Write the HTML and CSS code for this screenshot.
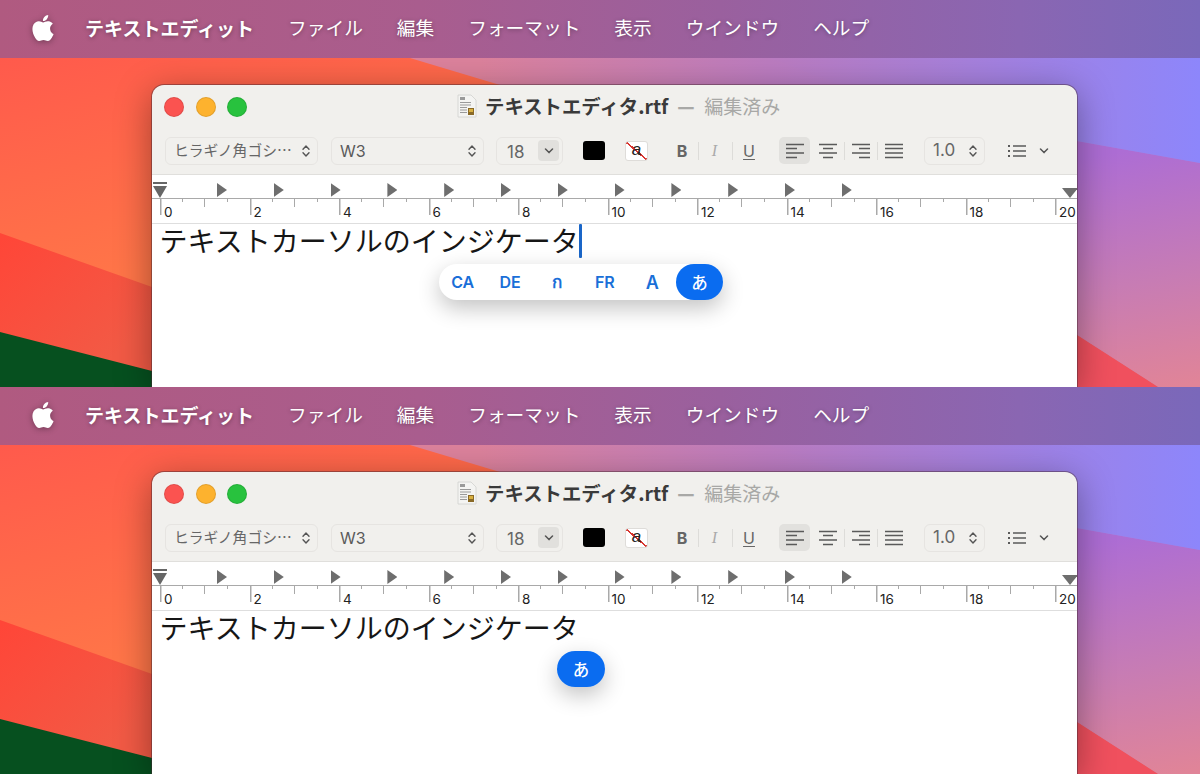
FILE: index.html
```html
<!DOCTYPE html>
<html lang="ja">
<head>
<meta charset="utf-8">
<title>テキストエディット</title>
<link rel="stylesheet" href="styles.css">
</head>
<body>
<svg class="sprite" aria-hidden="true">
  <defs>
    <linearGradient id="g-base" gradientUnits="userSpaceOnUse" x1="0" y1="58" x2="60" y2="290"><stop offset="0" stop-color="#ff5a4c"/><stop offset="1" stop-color="#ff7548"/></linearGradient>
    <linearGradient id="g-mid" gradientUnits="userSpaceOnUse" x1="480" y1="70" x2="960" y2="70"><stop offset="0" stop-color="#dc829c"/><stop offset=".6" stop-color="#bc7cc0"/><stop offset="1" stop-color="#a87fd8"/></linearGradient>
    <linearGradient id="g-top" gradientUnits="userSpaceOnUse" x1="780" y1="70" x2="1200" y2="70"><stop offset="0" stop-color="#ba7cc2"/><stop offset=".45" stop-color="#a680dc"/><stop offset="1" stop-color="#8d86fb"/></linearGradient>
    <linearGradient id="g-low" gradientUnits="userSpaceOnUse" x1="1130" y1="150" x2="1170" y2="387"><stop offset="0" stop-color="#ad6dd4"/><stop offset=".55" stop-color="#c77cb4"/><stop offset="1" stop-color="#e08498"/></linearGradient>
    <linearGradient id="g-red" gradientUnits="userSpaceOnUse" x1="0" y1="240" x2="110" y2="360"><stop offset="0" stop-color="#ff4638"/><stop offset="1" stop-color="#f25a45"/></linearGradient>
    <symbol id="wall" viewBox="0 0 1200 387" preserveAspectRatio="none">
      <rect width="1200" height="387" fill="url(#g-base)"/>
      <polygon points="410,58 1200,58 1200,387 1158,387 1077,335 500,85" fill="url(#g-mid)"/>
      <polygon points="1077,141 1200,163 1200,387 1158,387 1077,335" fill="url(#g-low)"/>
      <polygon points="770,58 1200,58 1200,163 1077,141 840,85" fill="url(#g-top)"/>
      <polygon points="1077,335 1158,387 1077,387" fill="#f0505e"/>
      <polygon points="0,233 152,287 152,387 0,387" fill="url(#g-red)"/>
      <polygon points="0,332 152,371 152,387 0,387" fill="#06501f"/>
    </symbol>
    <symbol id="apple" viewBox="0 0 24 24"><path d="M12.152 6.896c-.948 0-2.415-1.078-3.96-1.04-2.04.027-3.91 1.183-4.961 3.014-2.117 3.675-.546 9.103 1.519 12.09 1.013 1.454 2.208 3.09 3.792 3.039 1.52-.065 2.09-.987 3.935-.987 1.831 0 2.35.987 3.96.948 1.637-.026 2.676-1.48 3.676-2.948 1.156-1.688 1.636-3.325 1.662-3.415-.039-.013-3.182-1.221-3.22-4.857-.026-3.04 2.48-4.494 2.597-4.559-1.429-2.09-3.623-2.324-4.39-2.376-2-.156-3.675 1.09-4.61 1.09zM15.53 3.83c.843-1.012 1.4-2.427 1.245-3.83-1.207.052-2.662.805-3.532 1.818-.78.896-1.454 2.338-1.273 3.714 1.338.104 2.715-.688 3.559-1.701"/></symbol>
    <symbol id="doc" viewBox="0 0 20 24">
      <path d="M1 1h13l5 5v17H1z" fill="#f4f4f2" stroke="#d0d0ce" stroke-width=".8"/>
      <path d="M3 3h5v3H3zM3 8h11v1H3zM3 10.500h11v1H3zM3 13h7v1H3zM3 15.500h7v1H3zM3 18h7v1H3z" fill="#9a9a9a"/>
      <rect x="11" y="14" width="6" height="7" fill="#8a6a28"/><rect x="12" y="15" width="4" height="3" fill="#d8b040"/>
    </symbol>
    <symbol id="updown" viewBox="0 0 8 14"><path d="M1 5.200 4 2l3 3.200M1 8.800 4 12l3-3.200" fill="none" stroke="#555" stroke-width="1.400" stroke-linecap="round" stroke-linejoin="round"/></symbol>
    <symbol id="down" viewBox="0 0 10 6"><path d="M1.500 1 5 4.600 8.500 1" fill="none" stroke="#555" stroke-width="1.500" stroke-linecap="round" stroke-linejoin="round"/></symbol>
    <symbol id="al-left" viewBox="0 0 18 16"><path d="M0 1.500h18M0 5.500h11M0 10h18M0 14.500h11" stroke="#5a5a5a" stroke-width="1.300" fill="none"/></symbol>
    <symbol id="al-center" viewBox="0 0 18 16"><path d="M0 1.500h18M4 5.500h10M0 10h18M4 14.500h10" stroke="#5a5a5a" stroke-width="1.300" fill="none"/></symbol>
    <symbol id="al-right" viewBox="0 0 18 16"><path d="M0 1.500h18M7 5.500h11M0 10h18M7 14.500h11" stroke="#5a5a5a" stroke-width="1.300" fill="none"/></symbol>
    <symbol id="al-just" viewBox="0 0 18 16"><path d="M0 1.500h18M0 5.500h18M0 10h18M0 14.500h18" stroke="#5a5a5a" stroke-width="1.300" fill="none"/></symbol>
    <symbol id="list" viewBox="0 0 18 14"><path d="M5 2h13M5 7h13M5 12h13" stroke="#5a5a5a" stroke-width="1.300" fill="none"/><path d="M0 1h2v2H0zM0 6h2v2H0zM0 11h2v2H0z" fill="#5a5a5a"/></symbol>
    <symbol id="first" viewBox="0 0 14 16"><path d="M0 0h14v2H0z" fill="#666"/><path d="M0 4h14L7 16z" fill="#666"/></symbol>
    <symbol id="last" viewBox="0 0 16 10"><path d="M0 0h16L8 10z" fill="#6e6e6e"/></symbol>
  </defs>
</svg>

<section class="panel">
  <svg class="wallpaper" aria-hidden="true"><use href="#wall"/></svg>
  <nav class="menubar">
    <svg class="apple"><use href="#apple"/></svg>
    <span class="menu-app">テキストエディット</span>
    <span>ファイル</span><span>編集</span><span>フォーマット</span><span>表示</span><span>ウインドウ</span><span>ヘルプ</span>
  </nav>
  <div class="desktop">
    <div class="window">
      <header class="titlebar">
        <div class="lights"><i class="light red"></i><i class="light amber"></i><i class="light green"></i></div>
        <svg class="doc-icon"><use href="#doc"/></svg>
        <strong class="title-name">テキストエディタ.rtf</strong>
        <span class="title-dash">—</span>
        <span class="title-state">編集済み</span>
      </header>
      <div class="toolbar">
        <div class="select select-wide"><span>ヒラギノ角ゴシ…</span><svg class="updown"><use href="#updown"/></svg></div>
        <div class="select select-wide select-weight"><span>W3</span><svg class="updown"><use href="#updown"/></svg></div>
        <div class="select select-size"><span class="size-value">18</span><b class="size-btn"><svg class="down"><use href="#down"/></svg></b></div>
        <div class="swatch"></div>
        <div class="bg-swatch">a</div>
        <div class="styles"><span class="st st-b">B</span><span class="st st-i">I</span><span class="st st-u">U</span></div>
        <div class="aligns">
          <span class="al al-on"><svg class="al-icon"><use href="#al-left"/></svg></span>
          <span class="al"><svg class="al-icon"><use href="#al-center"/></svg></span>
          <span class="al al-sep"><svg class="al-icon"><use href="#al-right"/></svg></span>
          <span class="al al-sep"><svg class="al-icon"><use href="#al-just"/></svg></span>
        </div>
        <div class="select select-spacing"><span>1.0</span><svg class="updown"><use href="#updown"/></svg></div>
        <svg class="list-icon"><use href="#list"/></svg>
        <svg class="down list-down"><use href="#down"/></svg>
      </div>
      <div class="ruler">
        <svg class="first-marker"><use href="#first"/></svg>
        <svg class="last-marker"><use href="#last"/></svg>
        <div class="tabs"><i></i><i></i><i></i><i></i><i></i><i></i><i></i><i></i><i></i><i></i><i></i><i></i></div>
        <div class="marks"><span>0</span><span>2</span><span>4</span><span>6</span><span>8</span><span>10</span><span>12</span><span>14</span><span>16</span><span>18</span><span>20</span></div>
      </div>
      <div class="doc">
        <p class="doc-text">テキストカーソルのインジケータ<i class="caret"></i></p>
        <div class="indicator indicator-full">
          <span class="ind-item">CA</span><span class="ind-item">DE</span><span class="ind-item ind-thai">ก</span><span class="ind-item">FR</span><span class="ind-item ind-a">A</span><span class="ind-item ind-on">あ</span>
        </div>
      </div>
    </div>
  </div>
</section>

<section class="panel">
  <svg class="wallpaper" aria-hidden="true"><use href="#wall"/></svg>
  <nav class="menubar">
    <svg class="apple"><use href="#apple"/></svg>
    <span class="menu-app">テキストエディット</span>
    <span>ファイル</span><span>編集</span><span>フォーマット</span><span>表示</span><span>ウインドウ</span><span>ヘルプ</span>
  </nav>
  <div class="desktop">
    <div class="window">
      <header class="titlebar">
        <div class="lights"><i class="light red"></i><i class="light amber"></i><i class="light green"></i></div>
        <svg class="doc-icon"><use href="#doc"/></svg>
        <strong class="title-name">テキストエディタ.rtf</strong>
        <span class="title-dash">—</span>
        <span class="title-state">編集済み</span>
      </header>
      <div class="toolbar">
        <div class="select select-wide"><span>ヒラギノ角ゴシ…</span><svg class="updown"><use href="#updown"/></svg></div>
        <div class="select select-wide select-weight"><span>W3</span><svg class="updown"><use href="#updown"/></svg></div>
        <div class="select select-size"><span class="size-value">18</span><b class="size-btn"><svg class="down"><use href="#down"/></svg></b></div>
        <div class="swatch"></div>
        <div class="bg-swatch">a</div>
        <div class="styles"><span class="st st-b">B</span><span class="st st-i">I</span><span class="st st-u">U</span></div>
        <div class="aligns">
          <span class="al al-on"><svg class="al-icon"><use href="#al-left"/></svg></span>
          <span class="al"><svg class="al-icon"><use href="#al-center"/></svg></span>
          <span class="al al-sep"><svg class="al-icon"><use href="#al-right"/></svg></span>
          <span class="al al-sep"><svg class="al-icon"><use href="#al-just"/></svg></span>
        </div>
        <div class="select select-spacing"><span>1.0</span><svg class="updown"><use href="#updown"/></svg></div>
        <svg class="list-icon"><use href="#list"/></svg>
        <svg class="down list-down"><use href="#down"/></svg>
      </div>
      <div class="ruler">
        <svg class="first-marker"><use href="#first"/></svg>
        <svg class="last-marker"><use href="#last"/></svg>
        <div class="tabs"><i></i><i></i><i></i><i></i><i></i><i></i><i></i><i></i><i></i><i></i><i></i><i></i></div>
        <div class="marks"><span>0</span><span>2</span><span>4</span><span>6</span><span>8</span><span>10</span><span>12</span><span>14</span><span>16</span><span>18</span><span>20</span></div>
      </div>
      <div class="doc">
        <p class="doc-text">テキストカーソルのインジケータ</p>
        <div class="indicator indicator-single">
          <span class="ind-item ind-on">あ</span>
        </div>
      </div>
    </div>
  </div>
</section>
</body>
</html>
```

FILE: styles.css
```css
* { box-sizing: border-box; }
html, body { margin: 0; padding: 0; }
body {
  width: 1200px;
  height: 774px;
  overflow: hidden;
  font-family: "Noto Sans CJK JP", "Inter", "Liberation Sans", sans-serif;
  color: #222;
}
.sprite { position: absolute; width: 0; height: 0; }

.panel {
  position: relative;
  height: 387px;
  overflow: hidden;
  display: flex;
  flex-direction: column;
}
.wallpaper { position: absolute; inset: 0; width: 100%; height: 100%; }

/* menu bar */
.menubar {
  position: relative;
  z-index: 1;
  flex: none;
  height: 58px;
  display: flex;
  align-items: center;
  gap: 34px;
  padding: 0 0 3px 30px;
  background: linear-gradient(90deg, #b05a80 0%, #a95d8e 35%, #9a609e 60%, #8a66b2 85%, #7a68ba 100%);
  color: #fff;
  font-size: 18.700px;
  line-height: 1;
  text-shadow: 0 1px 4px rgba(0, 0, 0, .35);
}
.apple { width: 26px; height: 26px; fill: #fff; margin-right: -5px; filter: drop-shadow(0 1px 3px rgba(0, 0, 0, .35)); }
.menu-app { font-weight: 700; font-size: 19px; }

/* window */
.desktop {
  position: relative;
  flex: 1;
  min-height: 0;
  padding: 27px 123px 0 152px;
  display: flex;
}
.window {
  flex: 1;
  display: flex;
  flex-direction: column;
  border-radius: 12px 12px 0 0;
  background: #f1f0ed;
  box-shadow: 0 0 0 1px rgba(70, 40, 50, .45), 0 8px 36px rgba(0, 0, 0, .38);
  overflow: hidden;
}
.titlebar {
  flex: none;
  height: 45px;
  display: flex;
  align-items: center;
  padding-left: 12px;
  font-size: 19.400px;
  line-height: 1;
}
.lights { display: flex; gap: 11.500px; width: 83px; margin-bottom: 1px; }
.light { width: 20px; height: 20px; border-radius: 50%; border: 1px solid rgba(0, 0, 0, .1); }
.red { background: #fb5350; }
.amber { background: #fdb22e; }
.green { background: #28c23e; }
.doc-icon { width: 20px; height: 24px; margin: 0 8px 3px 210px; }
.title-name { font-weight: 700; color: #3a3a3a; margin-bottom: 4px; }
.title-dash { color: #a8a8a6; font-weight: 900; font-size: 19px; margin: 0 0 4px 9px; width: 27px; }
.title-state { color: #a8a8a6; font-weight: 400; font-size: 19px; margin-bottom: 4px; }

/* toolbar */
.toolbar {
  flex: none;
  height: 45px;
  padding: 7px 0 10px 13px;
  display: flex;
  align-items: center;
  border-bottom: 1px solid #e0dfdc;
}
.select {
  height: 28px;
  display: flex;
  align-items: center;
  justify-content: space-between;
  border: 1.500px solid #e6e4e1;
  border-radius: 6px;
  color: #666;
  font-size: 15px;
  line-height: 1;
  padding: 0 7px 0 8px;
}
.select-wide { width: 153px; font-size: 14.800px; }
.select-weight { margin-left: 13px; font-size: 16px; font-family: "Inter", "Liberation Sans", sans-serif; color: #5a5a5a; }
.select-size {
  width: 67px;
  margin-left: 12px;
  padding: 0 3px 0 10px;
  font-size: 17px;
  font-family: "Inter", "Liberation Sans", sans-serif;
}
.size-value { padding-top: 3px; }
.select-spacing { width: 61px; margin-left: 14px; font-size: 17px; font-family: "Inter", "Liberation Sans", sans-serif; }
.updown { width: 8px; height: 14px; flex: none; }
.down { width: 10px; height: 6px; }
.size-btn {
  width: 21px;
  height: 21px;
  border-radius: 4px;
  background: #e1e0dd;
  display: flex;
  align-items: center;
  justify-content: center;
}
.swatch { width: 22px; height: 19px; margin-left: 20px; border-radius: 3px; background: #000; }
.bg-swatch {
  width: 23px;
  height: 20px;
  margin-left: 20px;
  border: 1px solid #dedcd9;
  border-radius: 3px;
  background: linear-gradient(to top right, #fff 47%, #d8352f 47%, #d8352f 53%, #fff 53%);
  color: #222;
  font-size: 17px;
  font-style: italic;
  line-height: 16px;
  text-align: center;
  font-family: "Liberation Sans", sans-serif;
}
.styles { display: flex; margin-left: 21px; align-items: center; }
.st {
  width: 33px;
  height: 18px;
  line-height: 18px;
  text-align: center;
  font-size: 16px;
  color: #666;
  font-family: "Inter", "Liberation Sans", sans-serif;
  border-left: 1px solid #dddcd9;
}
.st-b { width: 29px; border-left: 0; font-weight: 700; padding-right: 3px; }
.st-i { width: 34px; color: #aaa; font-style: italic; font-family: "Liberation Serif", serif; padding-right: 2px; }
.st-u { width: 33px; text-decoration: underline; text-underline-offset: 2px; }
.aligns { display: flex; align-items: center; margin-left: 13px; }
.al {
  width: 33px;
  height: 18px;
  display: flex;
  align-items: center;
  justify-content: center;
}
.al-on { height: 27px; margin-left: 1px; width: 31px; margin-right: 1px; border-radius: 5px; background: #e2e1de; }
.al-sep { border-left: 1px solid #dddcd9; }
.al-icon { width: 18px; height: 16px; }
.list-icon { width: 18px; height: 14px; margin-left: 23px; }
.list-down { margin-left: 13px; }

/* ruler */
.ruler {
  position: relative;
  flex: none;
  height: 49px;
  background: #fff;
  border-bottom: 1px solid #dedede;
}
.first-marker { position: absolute; left: 1px; top: 7px; width: 14px; height: 16px; }
.last-marker { position: absolute; right: -1px; top: 13px; width: 16px; height: 10px; }
.tabs {
  height: 24px;
  display: flex;
  gap: 46.800px;
  align-items: flex-start;
  padding: 8px 0 0 65px;
  border-bottom: 1.500px solid #a9a9a9;
}
.tabs i {
  flex: none;
  width: 10px;
  height: 14px;
  background: #6e6e6e;
  clip-path: polygon(0 0, 100% 50%, 0 100%);
}
.marks { display: flex; padding-left: 8px; }
.marks span {
  flex: none;
  width: 89.500px;
  height: 23px;
  padding: 5px 0 0 4px;
  font-family: "Inter", "Liberation Sans", sans-serif;
  font-size: 13.500px;
  line-height: 16px;
  color: #222;
  background:
    linear-gradient(#a9a9a9, #a9a9a9) 0 0 / 1.500px 16px no-repeat,
    linear-gradient(#a9a9a9, #a9a9a9) 44px 0 / 1px 8px no-repeat,
    linear-gradient(#a9a9a9, #a9a9a9) 22px 0 / 1px 3px no-repeat,
    linear-gradient(#a9a9a9, #a9a9a9) 67px 0 / 1px 3px no-repeat;
}

/* document */
.doc { position: relative; flex: 1; background: #fff; padding-left: 7.500px; }
.doc-text {
  margin: 0;
  display: flex;
  align-items: center;
  height: 33px;
  font-size: 28px;
  line-height: 33px;
  font-weight: 400;
  color: #161616;
  white-space: nowrap;
}
.caret { width: 3px; height: 34px; background: #1a66c8; border-radius: 1px; }
.indicator {
  position: absolute;
  top: 40px;
  height: 36px;
  display: flex;
  align-items: center;
  border-radius: 18px;
  background: #fff;
  box-shadow: 0 8px 22px rgba(0, 0, 0, .24);
  font-family: "Inter", "Liberation Sans", "Noto Sans CJK JP", sans-serif;
}
.indicator-full { left: 287px; width: 284px; }
.indicator-single { left: 405px; width: 48px; }
.ind-item {
  flex: none;
  width: 47.400px;
  text-align: center;
  font-size: 16px;
  font-weight: 600;
  color: #1a6fd8;
  line-height: 36px;
}
.ind-thai { font-family: "Noto Sans", "DejaVu Sans", sans-serif; font-size: 17px; }
.ind-a { font-size: 18px; padding-top: 2px; }
.ind-on {
  width: 47px;
  height: 36px;
  border-radius: 18px;
  background: #0a6cf0;
  color: #fff;
  font-family: "Noto Sans CJK JP", sans-serif;
  font-weight: 500;
  font-size: 16.500px;
}
.indicator-single .ind-on { width: 48px; }
```
